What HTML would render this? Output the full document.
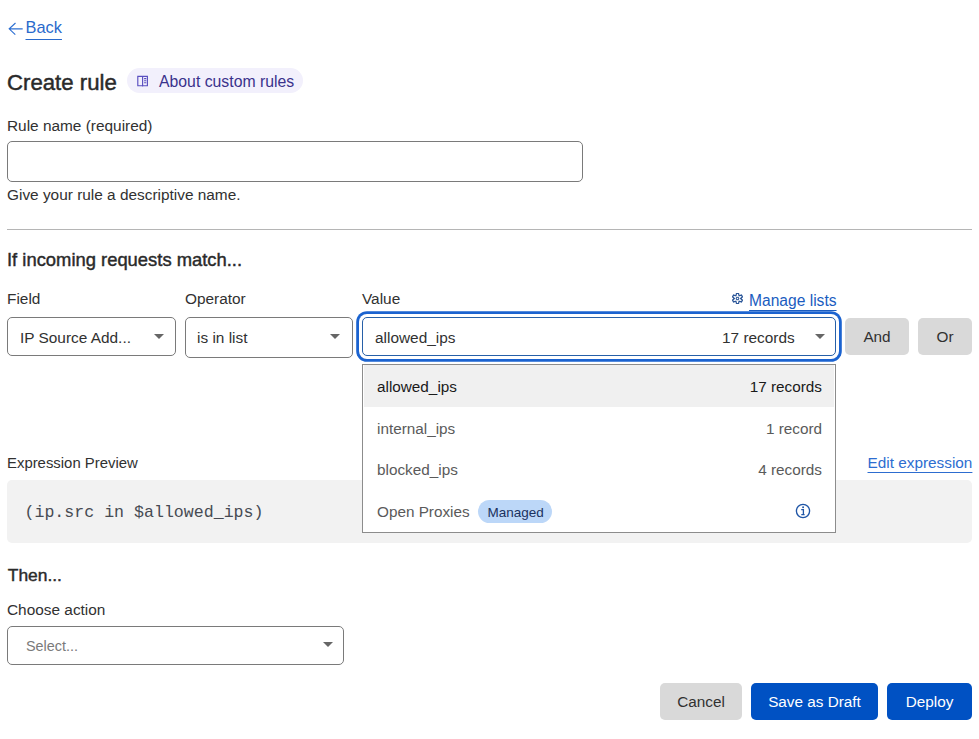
<!DOCTYPE html>
<html><head><meta charset="utf-8">
<style>
*{box-sizing:border-box;margin:0;padding:0}
html,body{width:979px;height:739px;overflow:hidden;background:#fff}
body{position:relative;font-family:"Liberation Sans",sans-serif;color:#313131}
.a{position:absolute;white-space:nowrap;line-height:1}
.lbl{font-size:15.4px;color:#313131}
.box{position:absolute;border:1px solid #7a7a7a;border-radius:5px;background:#fff}
.caret{position:absolute;width:0;height:0;border-left:5.3px solid transparent;border-right:5.3px solid transparent;border-top:5.5px solid #666}
.btn{position:absolute;border-radius:5px;font-size:15.3px;line-height:1;display:flex;align-items:center;justify-content:center}
.link{color:#0a58c8;text-decoration:underline;text-underline-offset:4px;text-decoration-thickness:1.5px}
.row{position:absolute;left:1px;right:1px;height:41.5px}
.rt{position:absolute;font-size:15.3px;line-height:1;white-space:nowrap}
</style></head><body>

<!-- Back -->
<svg class="a" style="left:8px;top:21px" width="16" height="16" viewBox="0 0 16 16"><path d="M14.7 7.8H1.3M7.5 2L1.2 7.8L7.3 13.7" fill="none" stroke="#2d6fd2" stroke-width="1.15"/></svg>
<div class="a link" style="left:25.5px;top:18.5px;font-size:16.4px;color:#2a6acc;text-underline-offset:5.5px;text-decoration-thickness:1px">Back</div>

<!-- Title -->
<div class="a" style="left:7px;top:71.5px;font-size:22.2px;color:#2a2a2a;-webkit-text-stroke:0.45px #2a2a2a">Create rule</div>
<div class="a" style="left:127px;top:68px;width:176px;height:25px;border-radius:13px;background:#f2f0fc"></div>
<svg class="a" style="left:136px;top:75px" width="13" height="13" viewBox="0 0 13 13"><path d="M1.8 1.4H11.4V10.7H1.8Z M6.6 1.4V11.6" fill="none" stroke="#5a4fc0" stroke-width="1.15"/><path d="M8.1 3.6H10.3M8.1 5.7H10.3M8.1 7.7H10.3" stroke="#5a4fc0" stroke-width="1.1"/></svg>
<div class="a" style="left:159px;top:74px;font-size:15.8px;color:#3a328c">About custom rules</div>

<div class="a lbl" style="left:7px;top:118px">Rule name (required)</div>
<div class="box" style="left:7px;top:141px;width:576px;height:41px"></div>
<div class="a lbl" style="left:7px;top:187px">Give your rule a descriptive name.</div>

<div class="a" style="left:7px;top:229px;width:965px;height:1px;background:#b5b5b5"></div>

<div class="a" style="left:7px;top:250.8px;font-size:18.4px;color:#2a2a2a;-webkit-text-stroke:0.42px #2a2a2a">If incoming requests match...</div>

<div class="a lbl" style="left:7px;top:291px">Field</div>
<div class="a lbl" style="left:185px;top:291px">Operator</div>
<div class="a lbl" style="left:362px;top:291px">Value</div>
<svg class="a" style="left:732px;top:293px" width="11" height="11" viewBox="0 0 10.5 10.5"><path d="M4.30 0.34 L6.20 0.34 L6.75 2.65 L9.02 1.97 L9.98 3.62 L8.25 5.25 L9.98 6.88 L9.02 8.53 L6.75 7.85 L6.20 10.16 L4.30 10.16 L3.75 7.85 L1.48 8.53 L0.52 6.88 L2.25 5.25 L0.52 3.62 L1.48 1.97 L3.75 2.65Z" fill="none" stroke="#2a5598" stroke-width="1.2" stroke-linejoin="miter"/><circle cx="5.25" cy="5.25" r="1.25" fill="none" stroke="#2a5598" stroke-width="1"/></svg>
<div class="a link" style="left:749px;top:293px;font-size:15.6px;color:#1a5cc0;text-decoration-thickness:1px;text-underline-offset:4px">Manage lists</div>

<div class="box" style="left:7px;top:317px;width:169px;height:39px"></div>
<div class="a lbl" style="left:20px;top:330px">IP Source Add...</div>
<div class="caret" style="left:154px;top:334px"></div>

<div class="box" style="left:185px;top:317px;width:168px;height:41px"></div>
<div class="a lbl" style="left:197px;top:330px">is in list</div>
<div class="caret" style="left:330px;top:334px"></div>

<div class="box" style="left:362px;top:317px;width:474px;height:39px;border-color:#2760a8;box-shadow:0 0 0 3px #fff,0 0 0 5.8px #1b63d0"></div>
<div class="a lbl" style="left:375px;top:330px">allowed_ips</div>
<div class="a lbl" style="left:722px;top:330px">17 records</div>
<div class="caret" style="left:815px;top:334px"></div>

<div class="btn" style="left:845px;top:318px;width:64px;height:37px;background:#d9d9d9;color:#313131">And</div>
<div class="btn" style="left:918px;top:318px;width:54px;height:37px;background:#d9d9d9;color:#313131">Or</div>

<!-- Expression -->
<div class="a lbl" style="left:7px;top:456px;font-size:14.9px">Expression Preview</div>
<div class="a link" style="left:867.5px;top:454.8px;font-size:15.35px;color:#2d6dd0;text-decoration-thickness:1px;text-underline-offset:4.2px">Edit expression</div>
<div class="a" style="left:7px;top:480px;width:965px;height:63px;border-radius:5px;background:#f2f2f2"></div>
<div class="a" style="left:24.5px;top:504.5px;font-family:'Liberation Mono',monospace;font-size:16.6px;color:#474b53">(ip.src in $allowed_ips)</div>

<!-- Dropdown -->
<div class="a" style="left:362px;top:364px;width:474px;height:169px;border:1px solid #8c8c8c;background:#fff">
  <div class="row" style="top:0;background:#f0f0f0"></div>
  <div class="rt" style="left:14px;top:13.6px;color:#1a1a1a">allowed_ips</div>
  <div class="rt" style="right:13px;top:13.6px;color:#1a1a1a">17 records</div>
  <div class="rt" style="left:14px;top:55.5px;color:#5a5a5a">internal_ips</div>
  <div class="rt" style="right:13px;top:55.5px;color:#5a5a5a">1 record</div>
  <div class="rt" style="left:14px;top:96.5px;color:#5a5a5a">blocked_ips</div>
  <div class="rt" style="right:13px;top:96.5px;color:#5a5a5a">4 records</div>
  <div class="rt" style="left:14px;top:138.5px;color:#5a5a5a">Open Proxies</div>
  <div class="a" style="left:115px;top:135px;width:74px;height:23px;border-radius:12px;background:#bcd7f8"></div>
  <div class="rt" style="left:124.5px;top:141px;font-size:13.5px;color:#1a3260">Managed</div>
  <svg class="a" style="left:431.5px;top:137.5px" width="16" height="16" viewBox="0 0 16 16"><circle cx="8" cy="8" r="6.6" fill="none" stroke="#1f55a6" stroke-width="1.35"/><circle cx="8.1" cy="4.3" r="0.95" fill="#1f55a6"/><path d="M6.2 6.6H8.4V11.4M6.3 11.6H9.6" fill="none" stroke="#1f55a6" stroke-width="1.3"/></svg>
</div>

<!-- Then -->
<div class="a" style="left:7.8px;top:567px;font-size:17.4px;color:#2a2a2a;-webkit-text-stroke:0.42px #2a2a2a">Then...</div>
<div class="a lbl" style="left:7px;top:601.8px">Choose action</div>
<div class="box" style="left:7px;top:626px;width:337px;height:39px"></div>
<div class="a lbl" style="left:26px;top:639px;font-size:14.4px;color:#7a7a7a">Select...</div>
<div class="caret" style="left:323px;top:642px"></div>

<div class="btn" style="left:660px;top:683px;width:82px;height:37px;background:#d9d9d9;color:#313131">Cancel</div>
<div class="btn" style="left:751px;top:683px;width:127px;height:37px;background:#0051c3;color:#fff">Save as Draft</div>
<div class="btn" style="left:887px;top:683px;width:85px;height:37px;background:#0051c3;color:#fff">Deploy</div>

</body></html>
